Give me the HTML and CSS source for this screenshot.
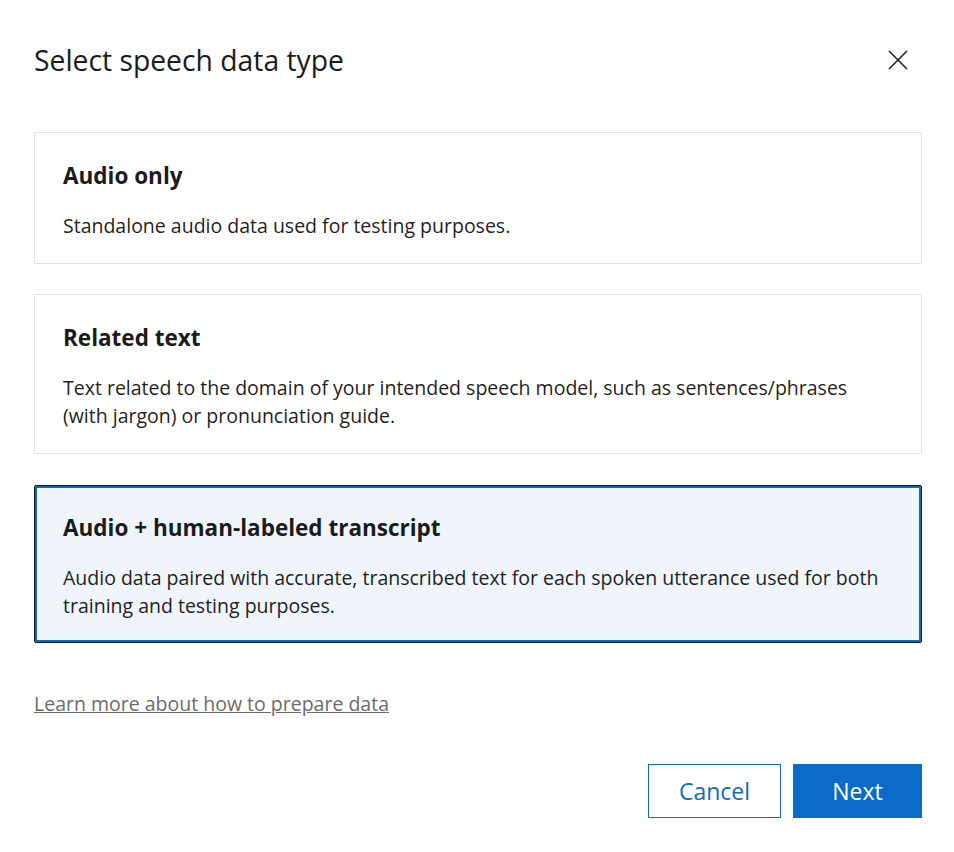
FILE: index.html
```html
<!DOCTYPE html>
<html lang="en">
<head>
<meta charset="utf-8">
<title>Select speech data type</title>
<link rel="stylesheet" href="styles.css">
</head>
<body>
<div class="dialog">
  <div class="header">
    <h1 class="title">Select speech data type</h1>
    <button class="close" aria-label="Close">
      <svg width="20" height="20" viewBox="0 0 20 20"><path d="M1 1 L19 19 M19 1 L1 19" stroke="#242424" stroke-width="1.6" fill="none"/></svg>
    </button>
  </div>
  <div class="options">
    <div class="card">
      <div class="card-title">Audio only</div>
      <div class="card-desc">Standalone audio data used for testing purposes.</div>
    </div>
    <div class="card">
      <div class="card-title">Related text</div>
      <div class="card-desc">Text related to the domain of your intended speech model, such as sentences/phrases (with jargon) or pronunciation guide.</div>
    </div>
    <div class="card selected">
      <div class="card-title">Audio + human-labeled transcript</div>
      <div class="card-desc">Audio data paired with accurate, transcribed text for each spoken utterance used for both training and testing purposes.</div>
    </div>
  </div>
  <a class="learn" href="#">Learn more about how to prepare data</a>
  <div class="footer">
    <button class="btn secondary">Cancel</button>
    <button class="btn primary">Next</button>
  </div>
</div>
</body>
</html>
```
FILE: styles.css
```css
html, body {
  margin: 0;
  padding: 0;
  background: #ffffff;
}
body {
  font-family: "Open Sans", "Noto Sans", sans-serif;
  color: #1b1b1b;
}
.dialog {
  width: 888px;
  padding: 0 32px 0 34px;
}
.header {
  display: flex;
  align-items: center;
  justify-content: space-between;
  height: 132px;
  padding-bottom: 12px;
  box-sizing: border-box;
}
.title {
  margin: 0;
  font-weight: 400;
  font-size: 28.3px;
  line-height: 36px;
  color: #1b1b1b;
}
.close {
  border: 0;
  background: transparent;
  padding: 0;
  margin-right: 14px;
  width: 20px;
  height: 20px;
  display: flex;
}
.options {
  display: flex;
  flex-direction: column;
  gap: 30px;
}
.card {
  border: 1px solid #e3e3e3;
  padding: 27px 28px 23px 28px;
  display: flex;
  flex-direction: column;
  gap: 20px;
}
.card-title {
  font-weight: 700;
  font-size: 22.5px;
  line-height: 32px;
}
.card-desc {
  font-size: 19.5px;
  line-height: 28px;
  color: #1f1f1f;
}
.card.selected {
  border: 1px solid #111111;
  border-radius: 2px;
  box-shadow: inset 0 0 0 2px #0f6cbd;
  background: #eff5fb;
  padding: 26px 28px 22px 28px;
  margin-top: 1px;
}
.learn {
  display: inline-block;
  margin-top: 47px;
  font-size: 19.5px;
  line-height: 28px;
  color: #6b6b6b;
  text-decoration: underline;
}
.footer {
  display: flex;
  justify-content: flex-end;
  gap: 12px;
  margin-top: 46px;
}
.btn {
  height: 54px;
  font-family: inherit;
  font-size: 23px;
  padding: 0 0 1px 0;
  box-sizing: border-box;
}
.secondary {
  width: 133px;
  background: #ffffff;
  color: #0f6cbd;
  border: 1px solid #0f6cbd;
}
.primary {
  width: 129px;
  background: #0a6bc8;
  color: #ffffff;
  border: 1px solid #0a6bc8;
}
```
